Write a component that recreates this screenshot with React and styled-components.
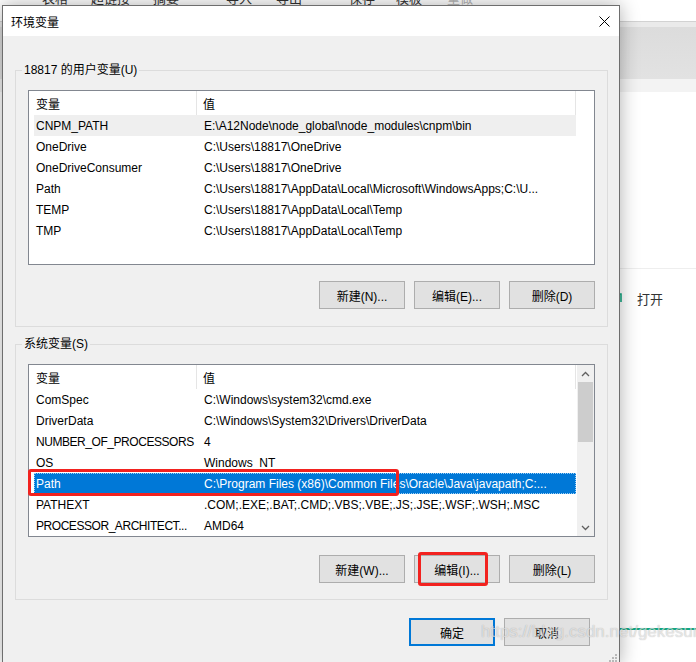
import React from 'react';
import styled, { createGlobalStyle } from 'styled-components';

const GlobalStyle = createGlobalStyle`
  html, body {
    margin: 0;
    padding: 0;
  }
  body {
    width: 696px;
    height: 662px;
    overflow: hidden;
    background: #ffffff;
    font-family: "Liberation Sans", "Noto Sans CJK SC", sans-serif;
    font-size: 12px;
    color: #000000;
  }
`;

const Page = styled.div`
  position: relative;
  width: 696px;
  height: 662px;
  overflow: hidden;
`;

/* ---- application behind the dialog ---- */

const Backdrop = styled.div`
  display: flex;
  flex-direction: column;
  width: 100%;
  height: 100%;
`;

const TabStrip = styled.div`
  display: flex;
  height: 21px;
  padding-left: 42px;
  font-family: "Noto Sans CJK SC", sans-serif;
  font-size: 13px;
  line-height: 14px;
  color: #333333;
  overflow: hidden;
`;

const Tab = styled.span`
  margin-top: -9px;
  margin-right: ${(p) => p.$gap}px;
  color: ${(p) => (p.$muted ? '#b5b5b5' : '#333333')};
  white-space: nowrap;
`;

const Toolbar = styled.div`
  height: 57px;
  border-top: 1px solid #d2d2d2;
  background: linear-gradient(#eaeaea 0, #eaeaea 5px, #dcdcdc 5px, #e2e2e2 100%);
`;

const SubBar = styled.div`
  height: 13px;
  background: #f3f3f3;
`;

const Main = styled.div`
  flex: 1;
  display: flex;
  justify-content: flex-end;
`;

const SidePane = styled.div`
  width: 80px;
  display: flex;
  flex-direction: column;
  padding-top: 176px;
  padding-bottom: 32px;
`;

const SideItem = styled.div`
  display: flex;
  align-items: center;
  gap: 15px;
  height: 58px;
  border-top: 1px solid #eeeeee;
  padding-left: 2px;
  font-family: "Noto Sans CJK SC", sans-serif;
  font-size: 13px;
  color: #333333;
`;

const GreenLine = styled.div`
  margin-top: auto;
  height: 2px;
  background: #13a882;
`;

/* ---- dialog ---- */

const Dialog = styled.div`
  position: absolute;
  left: 2px;
  top: 5px;
  width: 618px;
  height: 660px;
  box-sizing: border-box;
  border: 1px solid #6e6e6e;
  background: #f0f0f0;
  box-shadow: 0 0 18px rgba(0, 0, 0, 0.32);
  display: flex;
  flex-direction: column;
`;

const TitleBar = styled.div`
  height: 30px;
  flex-shrink: 0;
  background: #ffffff;
  display: flex;
  align-items: center;
  justify-content: space-between;
  padding: 0 9px 0 8px;
  font-family: "Noto Sans CJK SC", sans-serif;
  font-size: 12px;
`;

const Body = styled.div`
  flex: 1;
  display: flex;
  flex-direction: column;
  padding: 0 11px 0 12px;
`;

const Group = styled.fieldset`
  margin: ${(p) => p.$top}px 0 0 0;
  padding: 12px 12px ${(p) => p.$bottom}px 12px;
  border: 1px solid #dcdcdc;
  min-width: 0;
`;

const Caption = styled.legend`
  margin-left: -6px;
  padding: 0 2px;
  line-height: 16px;
  font-size: 12px;
  white-space: nowrap;
`;

const ListBox = styled.div`
  position: relative;
  height: ${(p) => p.$height}px;
  box-sizing: border-box;
  border: 1px solid #828790;
  background: #ffffff;
  display: flex;
`;

const ListContent = styled.div`
  flex: 1;
  overflow: hidden;
`;

const Header = styled.div`
  display: flex;
  height: 24px;
  width: 542px;
  margin-left: 5px;
  align-items: center;
`;

const HeadCell = styled.div`
  box-sizing: border-box;
  width: ${(p) => p.$width}px;
  height: 100%;
  display: flex;
  align-items: center;
  padding-left: ${(p) => p.$pad}px;
  border-right: 1px solid #e5e5e5;
  font-family: "Noto Sans CJK SC", sans-serif;
`;

const Row = styled.div`
  display: flex;
  align-items: center;
  height: 21px;
  width: 542px;
  margin-left: 5px;
  box-sizing: border-box;
  background: ${(p) => (p.$active ? '#0078d7' : p.$hover ? '#efefef' : 'transparent')};
  color: ${(p) => (p.$active ? '#ffffff' : '#000000')};
  outline: ${(p) => (p.$active ? '1px dotted #9fd0f5' : 'none')};
  outline-offset: -1px;
`;

const NameCell = styled.div`
  width: 163px;
  flex-shrink: 0;
  padding-left: 2px;
  box-sizing: border-box;
  white-space: nowrap;
  overflow: hidden;
  letter-spacing: ${(p) => (p.$condensed ? '-0.45px' : 'normal')};
`;

const ValueCell = styled.div`
  flex: 1;
  padding-left: 7px;
  white-space: nowrap;
  overflow: hidden;
`;

const ScrollBar = styled.div`
  width: 17px;
  flex-shrink: 0;
  background: #f0f0f0;
  display: flex;
  flex-direction: column;
  align-items: center;
`;

const ScrollArrow = styled.div`
  height: 17px;
  width: 17px;
  display: flex;
  align-items: center;
  justify-content: center;
`;

const Thumb = styled.div`
  width: 15px;
  height: 60px;
  background: #cdcdcd;
`;

const ScrollTrack = styled.div`
  flex: 1;
`;

const ButtonRow = styled.div`
  display: flex;
  justify-content: flex-end;
  gap: 9px;
  margin-top: ${(p) => p.$top}px;
  margin-right: ${(p) => p.$right || 0}px;
`;

const Button = styled.button`
  position: relative;
  width: 86px;
  height: 28px;
  box-sizing: border-box;
  padding: 0;
  border: ${(p) => (p.$default ? '2px solid #0078d7' : '1px solid #adadad')};
  background: #e1e1e1;
  font-family: "Liberation Sans", "Noto Sans CJK SC", sans-serif;
  font-size: 12px;
  color: #000000;
`;

const Highlight = styled.div`
  position: absolute;
  box-sizing: border-box;
  border: 3px solid #f2221f;
  border-radius: 3px;
  pointer-events: none;
`;

const RowMark = styled(Highlight)`
  left: -1px;
  top: 104px;
  width: 371px;
  height: 27px;
`;

const ButtonMark = styled(Highlight)`
  left: 3px;
  top: -4px;
  width: 70px;
  height: 34px;
`;

const Grip = styled.svg`
  position: absolute;
  right: 2px;
  bottom: 2px;
`;

const Watermark = styled.div`
  position: absolute;
  left: 481px;
  top: 622px;
  font-family: "Liberation Sans", sans-serif;
  font-size: 17px;
  color: rgba(255, 255, 255, 0.6);
  text-shadow: 0 0 1px rgba(0, 0, 0, 0.3);
  white-space: nowrap;
  pointer-events: none;
`;

const userVars = [
  ['CNPM_PATH', 'E:\\A12Node\\node_global\\node_modules\\cnpm\\bin'],
  ['OneDrive', 'C:\\Users\\18817\\OneDrive'],
  ['OneDriveConsumer', 'C:\\Users\\18817\\OneDrive'],
  ['Path', 'C:\\Users\\18817\\AppData\\Local\\Microsoft\\WindowsApps;C:\\U...'],
  ['TEMP', 'C:\\Users\\18817\\AppData\\Local\\Temp'],
  ['TMP', 'C:\\Users\\18817\\AppData\\Local\\Temp'],
];

const systemVars = [
  ['ComSpec', 'C:\\Windows\\system32\\cmd.exe'],
  ['DriverData', 'C:\\Windows\\System32\\Drivers\\DriverData'],
  ['NUMBER_OF_PROCESSORS', '4'],
  ['OS', 'Windows_NT'],
  ['Path', 'C:\\Program Files (x86)\\Common Files\\Oracle\\Java\\javapath;C:...'],
  ['PATHEXT', '.COM;.EXE;.BAT;.CMD;.VBS;.VBE;.JS;.JSE;.WSF;.WSH;.MSC'],
  ['PROCESSOR_ARCHITECT...', 'AMD64'],
];

const tabs = [
  ['表格', 23],
  ['超链接', 23],
  ['摘要', 47],
  ['导入', 24],
  ['导出', 47],
  ['保存', 21],
  ['模板', 25],
  ['重做', 0, true],
];

const Chevron = ({ down }) => (
  <svg width="9" height="6" viewBox="0 0 9 6">
    <polyline
      points={down ? '1,1 4.5,4.5 8,1' : '1,5 4.5,1.5 8,5'}
      fill="none"
      stroke="#606060"
      strokeWidth="1.3"
    />
  </svg>
);

const VarList = ({ rows, height, hoverIndex, activeIndex, scroll, children }) => (
  <ListBox $height={height}>
    <ListContent>
      <Header>
        <HeadCell $width={163} $pad={2}>变量</HeadCell>
        <HeadCell $width={379} $pad={6}>值</HeadCell>
      </Header>
      {rows.map(([name, value], i) => (
        <Row key={name + i} $hover={i === hoverIndex} $active={i === activeIndex}>
          <NameCell $condensed={name.length > 18}>{name}</NameCell>
          <ValueCell>{value}</ValueCell>
        </Row>
      ))}
    </ListContent>
    {scroll && (
      <ScrollBar>
        <ScrollArrow>
          <Chevron />
        </ScrollArrow>
        <Thumb />
        <ScrollTrack />
        <ScrollArrow>
          <Chevron down />
        </ScrollArrow>
      </ScrollBar>
    )}
    {children}
  </ListBox>
);

const App = () => (
  <Page>
    <GlobalStyle />
    <Backdrop>
      <TabStrip>
        {tabs.map(([label, gap, muted]) => (
          <Tab key={label} $gap={gap} $muted={muted}>
            {label}
          </Tab>
        ))}
      </TabStrip>
      <Toolbar />
      <SubBar />
      <Main>
        <SidePane>
          <SideItem>
            <svg width="4" height="12" viewBox="0 0 4 12">
              <path d="M0 2 H3 V10" fill="none" stroke="#13a882" strokeWidth="1.6" />
            </svg>
            打开
          </SideItem>
          <GreenLine />
        </SidePane>
      </Main>
    </Backdrop>

    <Dialog>
      <TitleBar>
        <span>环境变量</span>
        <svg width="11" height="11" viewBox="0 0 11 11">
          <path d="M0.5 0.5 L10.5 10.5 M10.5 0.5 L0.5 10.5" stroke="#000" strokeWidth="1" />
        </svg>
      </TitleBar>
      <Body>
        <Group $top={26} $bottom={17}>
          <Caption>18817 的用户变量(U)</Caption>
          <VarList rows={userVars} height={175} hoverIndex={0} />
          <ButtonRow $top={16}>
            <Button>新建(N)...</Button>
            <Button>编辑(E)...</Button>
            <Button>删除(D)</Button>
          </ButtonRow>
        </Group>

        <Group $top={9} $bottom={16}>
          <Caption>系统变量(S)</Caption>
          <VarList rows={systemVars} height={173} activeIndex={4} scroll>
            <RowMark />
          </VarList>
          <ButtonRow $top={18}>
            <Button>新建(W)...</Button>
            <Button>
              编辑(I)...
              <ButtonMark />
            </Button>
            <Button>删除(L)</Button>
          </ButtonRow>
        </Group>

        <ButtonRow $top={18} $right={18}>
          <Button $default>确定</Button>
          <Button>取消</Button>
        </ButtonRow>
      </Body>
      <Grip width="8" height="8" viewBox="0 0 8 8">
        <rect x="6" y="0" width="2" height="2" fill="#b8b8b8" />
        <rect x="3" y="3" width="2" height="2" fill="#b8b8b8" />
        <rect x="6" y="3" width="2" height="2" fill="#b8b8b8" />
        <rect x="0" y="6" width="2" height="2" fill="#b8b8b8" />
        <rect x="3" y="6" width="2" height="2" fill="#b8b8b8" />
        <rect x="6" y="6" width="2" height="2" fill="#b8b8b8" />
      </Grip>
    </Dialog>

    <Watermark>https://blog.csdn.net/gekesune</Watermark>
  </Page>
);

export default App;
